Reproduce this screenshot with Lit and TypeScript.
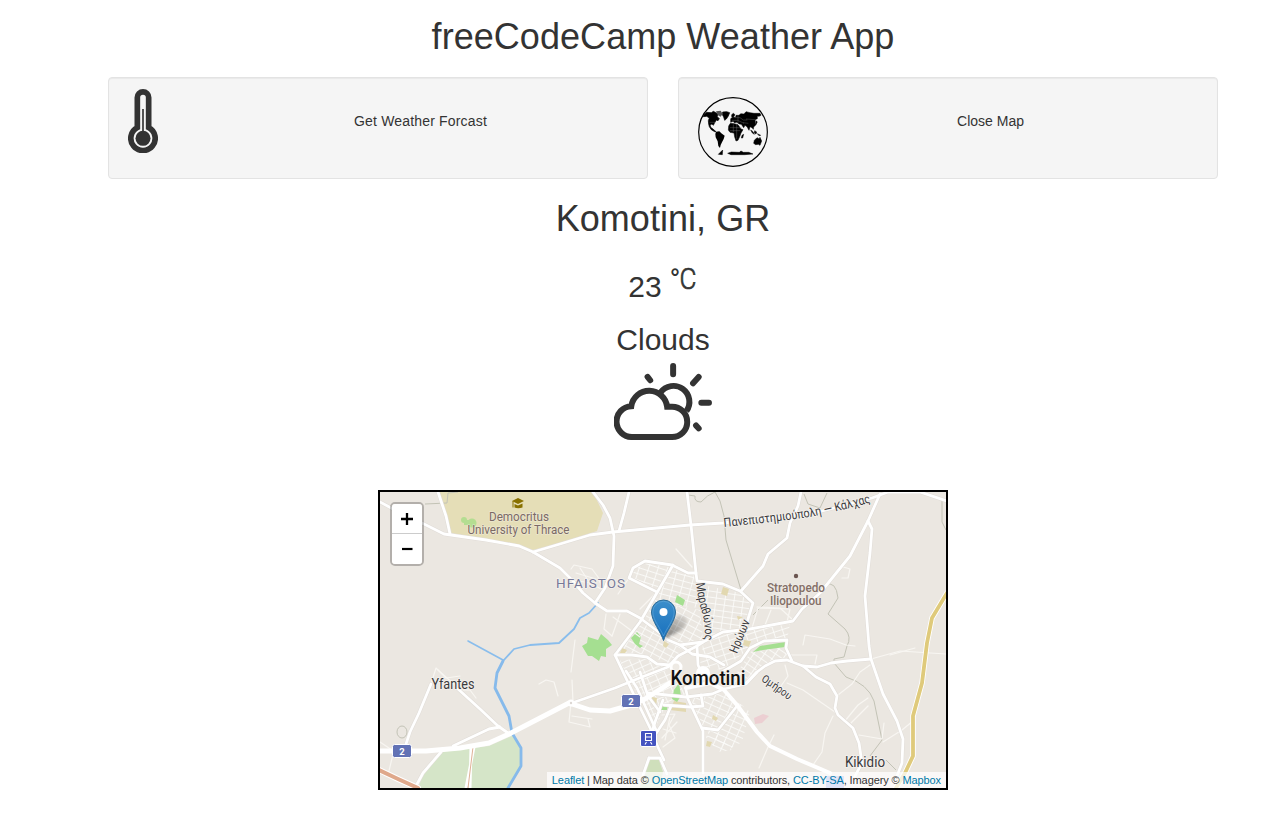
import { LitElement, html, svg, css } from "lit";
import { customElement } from "lit/decorators.js";

const MAJOR: string[] = [
  "380,502 393,509 424,524 444,534 486,540 519,546 533,552 560,568 573,581 583,593 595,603 607,611 627,611 640,618 660,633 668,640 680,645 703,642 723,632 750,629 793,621 802,609 820,593 850,556 868,521 880,494",
  "533,552 560,544 590,535 613,532 690,525 723,523 790,516 822,511 872,498 888,492 920,492 947,501",
  "438,492 446,516 450,534",
  "593,492 603,505 610,518 614,536 613,566 605,588 595,603",
  "629,492 624,513 619,531",
  "687,492 691,525 696,573 697,581 723,584 740,591 753,603 748,619 745,630",
  "741,591 763,566 768,554 787,538 790,523 798,506 801,492",
  "657,592 629,578 633,568 645,561 672,565 688,573 696,573",
  "673,565 640,622 615,655 633,693 652,732 657,745 664,760",
  "615,655 632,655 647,657 657,664 670,665",
  "572,703 615,688 642,677 668,667 678,656 697,646 703,642",
  "868,521 872,529 870,553 865,596 869,646 871,659 883,694 897,721 903,739 902,763 897,776",
  "745,684 757,672 765,666 775,661 787,660 803,666 817,667 831,663 847,661 871,659",
  "803,666 816,677 830,684 837,696 835,708 838,715 853,728 859,743 862,763 855,776",
  "431,684 419,713 410,732 406,744",
  "458,689 480,709 498,726 508,733",
  "453,746 489,729 500,727",
  "441,752 423,773 416,786",
  "703,773 703,731 688,699 686,690",
  "702,728 718,730 737,706",
  "626,671 637,688 656,730",
  "640,672 648,696 660,712",
  "663,700 655,722 652,732",
  "671,706 665,720 655,735",
  "664,705 690,707 703,706 701,695",
  "648,693 686,697 712,694 724,689",
  "697,646 698,665 704,678",
  "680,645 692,654 710,657 724,665",
  "722,672 741,661 750,648 764,641 787,640 786,648 792,661",
  "724,689 746,684 757,672",
  "649,758 660,758 667,774",
  "649,758 643,775",
];

const MINOR: string[] = [
  "571,569 574,565 592,569 598,577 603,590 590,583 573,580",
  "576,573 596,579", "580,568 591,585",
  "657,592 640,609", "629,578 618,594", "676,549 692,567",
  "613,617 640,637", "606,614 604,629 612,636", "620,614 612,636",
  "539,684 546,680 554,682 558,696", "575,640 571,672", "572,680 573,702",
  "571,702 569,722 590,727 588,719", "572,716 592,719",
  "431,684 436,668 446,678 460,676", "458,690 470,690 476,698", "438,670 456,686",
  "380,742 392,750", "394,750 388,775",
  "787,683 803,690 835,712", "833,716 825,733 822,752 813,765",
  "838,695 852,684 860,672 870,665", "871,659 900,651 946,654", "890,655 915,648",
  "845,721 858,705 868,698", "851,723 868,706", "859,735 882,739 884,723",
  "883,742 902,730 913,721", "803,645 805,635 830,639 846,645 855,646",
  "787,655 817,655 815,664", "785,665 788,676 781,686 787,694", "793,620 780,608 757,607",
  "765,625 771,610", "752,628 758,608 790,609 787,622", "840,566 850,569 848,578 842,578",
  "774,735 768,747 759,768", "662,715 675,714 669,725 675,738 663,747",
  "670,717 665,740", "677,722 662,738", "663,729 676,733",
];

const BLOCKS: { points: string; angle: number }[] = [
  { points: "631,577 636,567 648,563 670,567 657,590", angle: 18 },
  { points: "673,569 694,575 698,608 668,604 656,598", angle: 15 },
  { points: "654,598 668,604 700,610 703,640 680,643 662,632 644,617", angle: 28 },
  { points: "640,621 660,634 680,646 697,647 670,664 648,656 618,653", angle: 28 },
  { points: "699,584 740,593 751,604 744,629 722,631 705,640", angle: 8 },
  { points: "703,644 724,634 790,624 787,640 764,641 750,648 722,670 700,666", angle: -18 },
  { points: "619,660 648,659 668,668 686,694 666,705 655,728", angle: -24 },
  { points: "690,697 724,690 750,712 742,742 728,750 703,729", angle: 24 },
  { points: "752,650 786,642 788,658 764,664 748,680 728,686", angle: 34 },
  { points: "705,736 720,735 732,750 718,752", angle: 24 },
];

const PARKS: string[] = [
  "582,646 587,643 588,637 598,640 601,634 608,640 612,645 606,649 606,657 601,656 599,661 592,656 588,656",
  "677,595 685,600 683,606 675,602",
  "631,638 637,632 641,637 639,644 643,646 640,648 635,644",
  "674,690 679,683 681,696 677,702 672,699", "660,704 668,704 667,710 660,710",
  "753,652 760,646 785,642 785,647 763,650",
];

const SAND: string[] = [
  "723,587 729,589 727,596 721,594", "744,640 751,641 749,647 743,645",
  "674,701 686,703 686,712 670,710", "652,697 657,698 656,706 651,703",
  "713,715 718,718 716,721 712,719", "622,648 627,650 624,655 620,653",
  "737,616 743,617 738,620", "664,641 669,644 666,648 663,646", "707,741 712,742 710,747 706,746",
];

const roads = (list: string[], stroke: string, width: number) =>
  list.map((p) => svg`<polyline points=${p} fill="none" stroke=${stroke} stroke-width=${width} stroke-linejoin="round" stroke-linecap="round"/>`);

const fills = (list: string[], fill: string) => list.map((p) => svg`<polygon points=${p} fill=${fill}/>`);

@customElement("weather-map")
class WeatherMap extends LitElement {
  static styles = css`
    :host { display: block; position: relative; box-sizing: border-box; width: 570px; height: 300px; border: 2px solid #000; overflow: hidden; }
    .tiles { display: block; width: 566px; height: 296px; font-family: Roboto, "Open Sans", sans-serif; }
    .halo { paint-order: stroke; stroke: #f5f2ee; stroke-width: 1.6px; stroke-linejoin: round; }
    .zoom { position: absolute; left: 10px; top: 10px; display: flex; flex-direction: column; border: 2px solid rgba(0,0,0,.24); border-radius: 5px; background-clip: padding-box; }
    .zoom button { appearance: none; border: 0; margin: 0; padding: 0; width: 30px; height: 30px; background: #fff; display: grid; place-items: center; }
    .zoom button:first-child { border-bottom: 1px solid #ccc; border-radius: 3px 3px 0 0; }
    .zoom button:last-child { border-radius: 0 0 3px 3px; }
    .credit { position: absolute; right: 0; bottom: 0; padding: 0 5px; height: 16px; line-height: 16px; font-size: 11px; letter-spacing: -.107px; color: #333; background: rgba(255,255,255,.72); white-space: nowrap; font-family: "Liberation Sans", Arial, sans-serif; }
    .credit a { color: #0078a8; }
  `;

  render() {
    return html`
      <svg class="tiles" viewBox="380 492 566 296">
        <defs>
          ${BLOCKS.map((b, i) => svg`<pattern id=${"grid" + i} width="9" height="6" patternUnits="userSpaceOnUse" patternTransform=${`rotate(${b.angle})`}><path d="M0 .5H9M.5 0V6" stroke="#fbfaf8" stroke-width=".9" fill="none"/></pattern>`)}
          <linearGradient id="pin" x1="0" y1="0" x2="0" y2="1"><stop offset="0" stop-color="#3c8fcb"/><stop offset="1" stop-color="#176fbd"/></linearGradient>
          <linearGradient id="shade" x1="0" y1="1" x2="1" y2="0"><stop offset="0" stop-color="#000" stop-opacity=".5"/><stop offset="1" stop-color="#000" stop-opacity=".06"/></linearGradient>
          <filter id="soft" x="-30%" y="-30%" width="160%" height="160%"><feGaussianBlur stdDeviation="1.8"/></filter>
          <path id="campus" d="M724 527Q775 522 810 517Q845 510 876 501"/>
          <path id="marathon" d="M696 583Q698 602 703 615Q706 630 704 645"/>
          <path id="heroes" d="M737 654L751 619"/>
          <path id="homer" d="M761 681Q773 688 791 702"/>
        </defs>
        <rect x="380" y="492" width="566" height="296" fill="#ebe7e1"/>
        <polygon points="438,492 593,492 603,513 597,531 560,543 533,550 519,545 486,539 450,533" fill="#e5deb7"/>
        <g fill="#b4dd91"><circle cx="464" cy="520" r="3"/><circle cx="472" cy="523" r="4.5"/><rect x="464" y="520" width="10" height="5"/></g>
        <polygon points="441,752 489,746 514,735 522,748 521,768 509,788 418,788 424,773" fill="#d5e5c8"/>
        <polygon points="650,760 659,760 663,772 660,788 640,788 643,774" fill="#cfdfbb"/>
        <polygon points="754,718 763,714 769,716 762,723 755,724" fill="#eccfd2"/>
        <rect x="826" y="776" width="18" height="12" fill="#8f9de0"/>
        ${BLOCKS.map((b, i) => svg`<polygon points=${b.points} fill=${`url(#grid${i})`}/>`)}
        ${fills(SAND, "#e2d8b0")}
        ${fills(PARKS, "#a5df91")}
        <g fill="none" stroke="#c3c3b6" stroke-width="1">
          <path d="M688 495L695 496Q694 502 701 502Q707 495 715 492L720 501L724 516L726 540L732 560L741 590M804 494L808 504L820 508L827 493M825 585Q836 580 838 598L828 614L845 629Q852 637 847 646L844 657L834 659L834 663L846 677Q868 684 874 701L882 740L870 756M886 760L896 770M942 500L942 522L946 530M753 615L768 600M425 504L447 503L448 493L458 492"/>
          <ellipse cx="402" cy="732" rx="5" ry="6"/>
        </g>
        ${roads(MINOR, "#f8f6f2", 1.2)}
        ${roads(["468,641 503,660"], "#89bdec", 1.6)}
        ${roads(["598,603 589,613 580,618 574,629 559,643 530,645 514,649 503,661"], "#89bdec", 1.8)}
        ${roads(["503,661 497,673 495,688 502,702 509,716 512,733 521,748 521,766 508,788"], "#86baeb", 2.8)}
        <path d="M474 747L466 788M471 747L470 788" stroke="#fff" stroke-width="3" fill="none"/>
        <path d="M473 747L468 788" stroke="#dfb197" stroke-width="1" fill="none"/>
        ${roads(MAJOR, "#e0dcd7", 3.8)}
        ${roads(MAJOR, "#ffffff", 2.8)}
        ${roads(["686,688 710,683 724,690 737,705 757,732 770,746 797,759 830,773"], "#fff", 4)}
        ${roads(["380,751 426,751 460,748 489,743 509,734 540,718 569,703 590,710 610,711 631,705 645,699 670,683"], "#fff", 5)}
        <circle cx="571" cy="703" r="3.5" fill="#fff"/><circle cx="571" cy="703" r="1.2" fill="#ddd8d3"/>
        <circle cx="676" cy="667" r="5" fill="#eeeae4" stroke="#fff" stroke-width="3"/>
        <circle cx="703" cy="673" r="7" fill="#fff"/>
        ${roads(["379,770 398,779 418,788"], "#fff", 6)}
        ${roads(["379,770 398,779 418,788"], "#dfa88b", 4)}
        ${roads(["947,593 932,618 927,643 922,683 913,716 913,756 905,773 896,788"], "#fff", 5.5)}
        ${roads(["947,593 932,618 927,643 922,683 913,716 913,756 905,773 896,788"], "#dfca7b", 3.8)}

        <g fill="#887100"><path d="M512 501L518 498L524 501L518 504Z"/><path d="M514.500 504L518 505.500L522.500 503.500V507.500Q518 509 514.500 507.500Z"/><path d="M513 501V507.500" stroke="#887100" stroke-width="1"/></g>
        <g class="halo" fill="#7b6a65" font-size="12.2" stroke-opacity=".45">
          <text x="489" y="521" textLength="60" lengthAdjust="spacingAndGlyphs">Democritus</text>
          <text x="467.500" y="534" textLength="102" lengthAdjust="spacingAndGlyphs">University of Thrace</text>
          <text x="767" y="592" textLength="58" lengthAdjust="spacingAndGlyphs" font-weight="500" fill="#836f66">Stratopedo</text>
          <text x="770" y="605" textLength="51.500" lengthAdjust="spacingAndGlyphs" font-weight="500" fill="#836f66">Iliopoulou</text>
        </g>
        <circle cx="796" cy="576" r="2.200" fill="#6b5550"/>
        <text class="halo" x="556" y="588" font-size="13.500" textLength="69" fill="#777998">HFAISTOS</text>
        <g class="halo" fill="#3a3a3d">
          <text font-size="12.500"><textPath href="#campus" textLength="149" lengthAdjust="spacingAndGlyphs">Πανεπιστημιούπολη — Κάλχας</textPath></text>
          <text font-size="12.500"><textPath href="#marathon" textLength="58" lengthAdjust="spacingAndGlyphs">Μαραθώνος</textPath></text>
          <text font-size="12.500"><textPath href="#heroes" textLength="35" lengthAdjust="spacingAndGlyphs">Ηρώων</textPath></text>
          <text font-size="11"><textPath href="#homer" textLength="34" lengthAdjust="spacingAndGlyphs">Ομήρου</textPath></text>
          <text x="431.500" y="689" font-size="14" textLength="43" lengthAdjust="spacingAndGlyphs">Yfantes</text>
          <text x="845" y="766.500" font-size="14" textLength="40" lengthAdjust="spacingAndGlyphs">Kikidio</text>
        </g>
        <text class="halo" x="670.500" y="685" font-size="19.500" font-weight="500" textLength="75" lengthAdjust="spacingAndGlyphs" fill="#111">Komotini</text>

        <g fill="#6272b5" stroke="#fff" stroke-width="1"><rect x="392.500" y="744.500" width="19" height="13" rx="2"/><rect x="621.500" y="694.500" width="19" height="13" rx="2"/></g>
        <g fill="#fff" font-size="9.500" font-weight="700" text-anchor="middle"><text x="402" y="754.500">2</text><text x="631" y="704.500">2</text></g>
        <rect x="640.500" y="730.500" width="16" height="16" rx="1.500" fill="#4453c0" stroke="#fff"/>
        <path d="M645.500 733.500H651.500V740.500H645.500ZM645.500 737H651.500M646.500 742L645 744.500M650.500 742L652 744.500" fill="none" stroke="#fff" stroke-width="1.100"/>

        <path d="M664 639L672 622Q678 612 686 617Q690 624 680 631Z" fill="url(#shade)" filter="url(#soft)"/>
        <path d="M663.500 640.500C661 632 651.500 621 651.500 612A12 12 0 0 1 675.500 612C675.500 621 666 632 663.500 640.500Z" fill="url(#pin)" stroke="#2e6c97"/>
        <path d="M663.500 636C661 629 652.800 620 652.800 612A10.700 10.700 0 0 1 674.200 612C674.200 620 666 629 663.500 636Z" fill="none" stroke="#6fb0dc" stroke-opacity=".5"/>
        <circle cx="663.500" cy="612" r="4" fill="#fff"/>
      </svg>
      <div class="zoom">
        <button aria-label="Zoom in"><svg width="14" height="14"><path d="M1 7H13M7 1V13" stroke="#000" stroke-width="2.300"/></svg></button>
        <button aria-label="Zoom out"><svg width="14" height="14"><path d="M2 7H12.500" stroke="#000" stroke-width="2.200"/></svg></button>
      </div>
      <div class="credit"><a>Leaflet</a> | Map data © <a>OpenStreetMap</a> contributors, <a>CC-BY-SA</a>, Imagery © <a>Mapbox</a></div>
    `;
  }
}

@customElement("app-root")
class AppRoot extends LitElement {
  static styles = css`
    :host { display: block; width: 1280px; height: 820px; overflow: hidden; background: #fff; color: #333; font-family: "Liberation Sans", Arial, sans-serif; font-size: 14px; line-height: 20px; }
    .container { width: 1110px; margin-left: 108px; padding-top: 17px; display: flex; flex-direction: column; align-items: center; }
    h1, h2 { margin: 0; font-weight: 400; }
    h1 { font-size: 36px; line-height: 40px; letter-spacing: .05px; }
    h2 { font-size: 30px; line-height: 34px; }
    .row { display: grid; grid-template-columns: 1fr 1fr; gap: 30px; width: 100%; margin: 20px 0; }
    .well { box-sizing: border-box; height: 102px; display: flex; padding: 19px; border: 1px solid #e3e3e3; border-radius: 4px; background: #f5f5f5; box-shadow: inset 0 1px 1px rgba(0,0,0,.05); }
    .icon { width: 85px; flex: none; }
    .icon svg { display: block; }
    .thermo { margin-top: -8px; }
    .label { flex: 1; text-align: center; padding-top: 14px; }
    .spaced { letter-spacing: .17px; }
    .temp { display: flex; margin-top: 31px; gap: 8px; height: 34px; }
    .unit { margin-top: -11px; font-family: Roboto, sans-serif; flex: none; }
    .state { margin-top: 19px; }
    .sky { display: block; margin: 6px 0 50px; }
  `;

  render() {
    return html`
      <div class="container">
        <h1>freeCodeCamp Weather App</h1>
        <div class="row">
          <div class="well">
            <div class="icon">
              <svg class="thermo" width="30" height="64" viewBox="84 57 90 192" fill="none" stroke="#333">
                <path d="M112 172.700V82.500A17 17 0 0 1 146 82.500V172.700A36.500 36.500 0 1 1 112 172.700Z" stroke-width="17"/>
                <path d="M129 117V195" stroke-width="5"/>
                <circle cx="129" cy="205" r="22.500" fill="#333" stroke="none"/>
              </svg>
            </div>
            <div class="label spaced">Get Weather Forcast</div>
          </div>
          <div class="well">
            <div class="icon">
              <svg width="70" height="70" viewBox="12 15 210 210">
                <circle cx="117" cy="120" r="103" fill="none" stroke="#000" stroke-width="3.500"/>
                <path d="M31 67L38 61L52 62L58 58L66 62L72 66L70 74L76 80L72 86L67 84L62 92L58 100L54 96L48 98L50 106L58 112L66 119L62 119L52 113L46 104L44 96L43 86L46 78L38 73L28 74ZM86 60L98 59L107 62L103 72L97 81L92 85L89 75L85 68Z" stroke="#000" stroke-width="2"/>
                <path d="M66 58L80 56L86 65L80 74L72 70Z" fill="#555"/>
                <path d="M66 119L76 118L82 124L92 131L89 141L84 151L80 159L78 168L73 162L71 148L65 136L64 126Z"/>
                <path d="M113 68L118 64L123 68L118 76L113 74ZM110 80L115 76L125 76L126 70L135 70L140 65L150 66L156 59L168 62L180 64L198 64L201 70L195 73L190 72L190 80L183 83L184 91L186 98L179 105L178 112L174 107L168 104L165 115L159 104L153 100L149 107L142 97L136 96L128 91L121 92L117 88L110 91ZM109 94L121 95L132 98L141 111L147 113L141 123L137 134L132 145L126 147L122 135L120 123L108 121L103 114L104 102ZM144 130L149 127L146 138L142 138ZM181 145L189 137L195 140L198 136L203 147L198 160L193 157L185 158L179 154ZM170 114L177 119L181 127L175 123ZM182 116L188 120L186 126L181 123ZM190 125L200 130L195 131ZM186 86L190 90L186 97ZM101 184L112 180L136 181L141 177L148 181L164 181L177 186L152 188L111 188ZM76 184L86 174L85 188L73 187Z" stroke="#000" stroke-width="1.500"/>
                <path d="M47 91H66M122 77H138L148 84H160M114 85L131 85L150 94M118 97V120M128 98V141M108 107H143M108 116H139M147 92L163 94M156 81L183 83M132 71V92" fill="none" stroke="#999" stroke-width=".900"/>
              </svg>
            </div>
            <div class="label">Close Map</div>
          </div>
        </div>
        <h1>Komotini, GR</h1>
        <div class="temp">
          <h2>23</h2>
          <svg class="unit" width="28" height="44" viewBox="0 0 28 44" fill="#333">
            <text x="-.5" y="30.500" font-size="30" textLength="11" lengthAdjust="spacingAndGlyphs">°</text>
            <text x="9.500" y="30" font-size="30" font-weight="300" textLength="17" lengthAdjust="spacingAndGlyphs" stroke="#333" stroke-width=".7">C</text>
          </svg>
        </div>
        <h2 class="state">Clouds</h2>
        <svg class="sky" width="98" height="77" viewBox="222 518 295 232" fill="none" stroke="#333" stroke-width="18" stroke-linecap="round">
          <path d="M274 648A54.500 54.500 0 0 1 382 650H397A45.500 45.500 0 0 1 397 741H278A46.500 46.500 0 0 1 274 648Z"/>
          <path d="M362 607A48 48 0 0 1 440 663" stroke-linecap="butt"/>
          <path d="M400 527V552M477 560L460 579M485 638H508M469 706L477 715M323 560L331 570"/>
        </svg>
        <weather-map></weather-map>
      </div>
    `;
  }
}
